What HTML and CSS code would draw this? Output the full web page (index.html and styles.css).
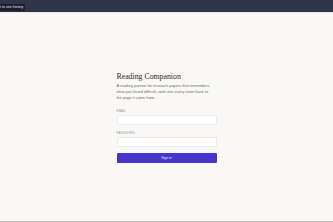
FILE: index.html
```html
<!DOCTYPE html>
<html lang="en">
<head>
  <meta charset="UTF-8">
  <meta name="viewport" content="width=device-width, initial-scale=1.0">
  <title>Reading Companion</title>
  <link rel="stylesheet" href="styles.css">
</head>
<body>
  <!-- Top Bar -->
  <div class="topbar">
    <div class="tooltip">t to see history</div>
  </div>

  <!-- Sign in -->
  <main class="main">
    <div class="login">
      <h1>Reading Companion</h1>
      <p class="intro">A reading partner for research papers that remembers what you found difficult, and cites every claim back to the page it came from.</p>
      <form class="form">
        <label class="label" for="email">Email</label>
        <input class="input" id="email" type="email">
        <label class="label" for="password">Password</label>
        <input class="input" id="password" type="password">
        <button class="btn" type="button">Sign in</button>
      </form>
    </div>
  </main>
</body>
</html>
```

FILE: styles.css
```css
/* General Styling */
html, body {
  height: 100%;
}
body {
  margin: 0;
  font-family: 'Liberation Sans', Arial, sans-serif;
  background-color: #f9f8f6;
  display: flex;
  flex-direction: column;
  box-sizing: border-box;
  border-bottom: 1px solid #c4c4c4;
}
/* Top Bar */
.topbar {
  position: relative;
  height: 12px;
  background-color: #2f3649;
  border-bottom: 1px solid #e9e9e9;
  flex-shrink: 0;
}
.tooltip {
  position: absolute;
  left: 0;
  top: 4px;
  padding: 1px 2px 1px 0;
  background-color: #1b1f2b;
  color: #e6e6e6;
  font-size: 3.6px;
  line-height: 5px;
  border-radius: 0 1px 1px 0;
}
/* Login Card */
.main {
  flex: 1;
  display: flex;
  align-items: center;
  justify-content: center;
}
.login {
  width: 100px;
  margin-top: 1px;
}
h1 {
  font-family: 'Liberation Serif', 'Times New Roman', serif;
  font-size: 7.8px;
  font-weight: normal;
  color: #2b2b2b;
  margin: 0 0 2px;
  line-height: 9px;
}
.intro {
  max-width: 96px;
  font-size: 3.9px;
  line-height: 6px;
  color: #6a6a6a;
  margin: 0 0 8px;
}
.form {
  display: flex;
  flex-direction: column;
}
.label {
  font-size: 2.8px;
  line-height: 4px;
  letter-spacing: 0.3px;
  text-transform: uppercase;
  color: #8a8a8a;
  margin-bottom: 2px;
}
.input {
  height: 10px;
  box-sizing: border-box;
  border: 0.5px solid #ececec;
  border-radius: 1px;
  background-color: #ffffff;
  margin: 0 0 6px;
  padding: 0;
}
.btn {
  height: 10px;
  margin-top: 0;
  background-color: #4535c9;
  color: #e8e6ff;
  border: none;
  border-radius: 1px;
  font-family: 'Liberation Sans', Arial, sans-serif;
  font-size: 3.4px;
  padding: 0;
}
```
